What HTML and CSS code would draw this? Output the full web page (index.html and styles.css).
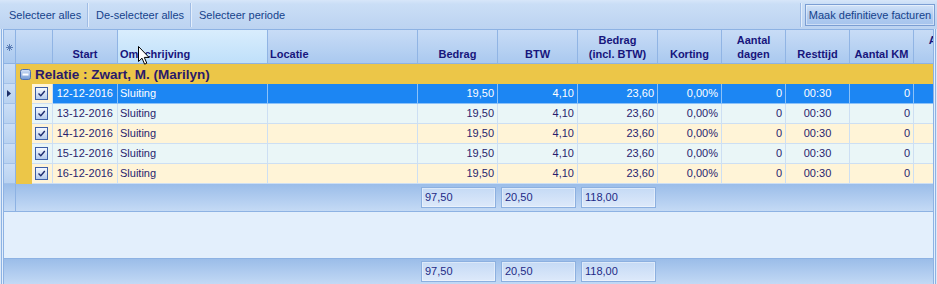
FILE: index.html
```html
<!DOCTYPE html>
<html>
<head>
<meta charset="utf-8">
<title>Facturen</title>
<link rel="stylesheet" href="styles.css">
</head>
<body>
<div class="toolbar">
  <div class="tb-left">
    <button class="tb-btn b1">Selecteer alles</button>
    <button class="tb-btn b2">De-selecteer alles</button>
    <button class="tb-btn b3">Selecteer periode</button>
  </div>
  <div class="tb-right">
    <button class="tb-action">Maak definitieve facturen</button>
  </div>
</div>
<div class="frame">
  <div class="grid">
    <div class="row head">
      <div class="c ind hind"><svg width="7" height="7" viewBox="0 0 7 7"><g stroke="#5a7cb4" stroke-width="1"><path d="M3.5 0V7M0 3.5H7M1 1L6 6M6 1L1 6"/></g></svg></div>
      <div class="c h c-pre"></div>
      <div class="c h c-start">Start</div>
      <div class="c h c-oms hover left">Omschrijving</div>
      <div class="c h c-loc left">Locatie</div>
      <div class="c h c-num">Bedrag</div>
      <div class="c h c-num">BTW</div>
      <div class="c h c-num">Bedrag<br>(incl. BTW)</div>
      <div class="c h c-sm">Korting</div>
      <div class="c h c-sm">Aantal<br>dagen</div>
      <div class="c h c-sm">Resttijd</div>
      <div class="c h c-sm">Aantal KM</div>
      <div class="c h c-sm">Aantal<br>uren</div>
    </div>
    <div class="row grp-row">
      <div class="c ind"></div>
      <div class="grp"><span class="minus"><svg width="11" height="11" viewBox="0 0 11 11"><rect x="0.5" y="0.5" width="10" height="10" rx="2" fill="url(#mg)" stroke="#4d70b2"/><defs><linearGradient id="mg" x1="0" y1="0" x2="0" y2="1"><stop offset="0" stop-color="#d3e2f7"/><stop offset="1" stop-color="#7199d4"/></linearGradient></defs><rect x="2.5" y="4.5" width="6" height="2" fill="#fff"/></svg></span>Relatie : Zwart, M. (Marilyn)</div>
    </div>

    <div class="row drow sel">
      <div class="c ind"><svg width="4" height="7" viewBox="0 0 4 7"><path d="M0 0L4 3.5L0 7Z" fill="#1b2d66"/></svg></div>
      <div class="c indent"></div>
      <div class="c c-chk cream"><span class="cb"><svg width="11" height="11" viewBox="0 0 11 11"><path d="M2.5 5.5L4.8 7.8L8.8 3" fill="none" stroke="#1c2a6e" stroke-width="1.4"/></svg></span></div>
      <div class="c d c-start r">12-12-2016</div>
      <div class="c d c-oms">Sluiting</div>
      <div class="c d c-loc"></div>
      <div class="c d c-num r">19,50</div>
      <div class="c d c-num r">4,10</div>
      <div class="c d c-num r">23,60</div>
      <div class="c d c-sm r">0,00%</div>
      <div class="c d c-sm r">0</div>
      <div class="c d c-sm ctr">00:30</div>
      <div class="c d c-sm r">0</div>
      <div class="c d c-sm"></div>
    </div>
    <div class="row drow cyan">
      <div class="c ind"></div>
      <div class="c indent"></div>
      <div class="c c-chk"><span class="cb"><svg width="11" height="11" viewBox="0 0 11 11"><path d="M2.5 5.5L4.8 7.8L8.8 3" fill="none" stroke="#1c2a6e" stroke-width="1.4"/></svg></span></div>
      <div class="c d c-start r">13-12-2016</div>
      <div class="c d c-oms">Sluiting</div>
      <div class="c d c-loc"></div>
      <div class="c d c-num r">19,50</div>
      <div class="c d c-num r">4,10</div>
      <div class="c d c-num r">23,60</div>
      <div class="c d c-sm r">0,00%</div>
      <div class="c d c-sm r">0</div>
      <div class="c d c-sm ctr">00:30</div>
      <div class="c d c-sm r">0</div>
      <div class="c d c-sm"></div>
    </div>
    <div class="row drow creamrow">
      <div class="c ind"></div>
      <div class="c indent"></div>
      <div class="c c-chk"><span class="cb"><svg width="11" height="11" viewBox="0 0 11 11"><path d="M2.5 5.5L4.8 7.8L8.8 3" fill="none" stroke="#1c2a6e" stroke-width="1.4"/></svg></span></div>
      <div class="c d c-start r">14-12-2016</div>
      <div class="c d c-oms">Sluiting</div>
      <div class="c d c-loc"></div>
      <div class="c d c-num r">19,50</div>
      <div class="c d c-num r">4,10</div>
      <div class="c d c-num r">23,60</div>
      <div class="c d c-sm r">0,00%</div>
      <div class="c d c-sm r">0</div>
      <div class="c d c-sm ctr">00:30</div>
      <div class="c d c-sm r">0</div>
      <div class="c d c-sm"></div>
    </div>
    <div class="row drow cyan">
      <div class="c ind"></div>
      <div class="c indent"></div>
      <div class="c c-chk"><span class="cb"><svg width="11" height="11" viewBox="0 0 11 11"><path d="M2.5 5.5L4.8 7.8L8.8 3" fill="none" stroke="#1c2a6e" stroke-width="1.4"/></svg></span></div>
      <div class="c d c-start r">15-12-2016</div>
      <div class="c d c-oms">Sluiting</div>
      <div class="c d c-loc"></div>
      <div class="c d c-num r">19,50</div>
      <div class="c d c-num r">4,10</div>
      <div class="c d c-num r">23,60</div>
      <div class="c d c-sm r">0,00%</div>
      <div class="c d c-sm r">0</div>
      <div class="c d c-sm ctr">00:30</div>
      <div class="c d c-sm r">0</div>
      <div class="c d c-sm"></div>
    </div>
    <div class="row drow creamrow">
      <div class="c ind"></div>
      <div class="c indent"></div>
      <div class="c c-chk"><span class="cb"><svg width="11" height="11" viewBox="0 0 11 11"><path d="M2.5 5.5L4.8 7.8L8.8 3" fill="none" stroke="#1c2a6e" stroke-width="1.4"/></svg></span></div>
      <div class="c d c-start r">16-12-2016</div>
      <div class="c d c-oms">Sluiting</div>
      <div class="c d c-loc"></div>
      <div class="c d c-num r">19,50</div>
      <div class="c d c-num r">4,10</div>
      <div class="c d c-num r">23,60</div>
      <div class="c d c-sm r">0,00%</div>
      <div class="c d c-sm r">0</div>
      <div class="c d c-sm ctr">00:30</div>
      <div class="c d c-sm r">0</div>
      <div class="c d c-sm"></div>
    </div>

    <div class="row foot">
      <div class="c find"></div>
      <div class="fspace"></div>
      <div class="fcell"><span class="sum">97,50</span></div>
      <div class="fcell"><span class="sum">20,50</span></div>
      <div class="fcell"><span class="sum">118,00</span></div>
    </div>
    <div class="empty"></div>
    <div class="row bfoot">
      <div class="bspace"></div>
      <div class="fcell"><span class="sum">97,50</span></div>
      <div class="fcell"><span class="sum">20,50</span></div>
      <div class="fcell"><span class="sum">118,00</span></div>
    </div>
  </div>
</div>
<svg class="cursor" width="12" height="19" viewBox="0 0 12 19"><path d="M0.5 0.5V15.5L4 12.2L6.6 18.2L8.8 17.2L6.3 11.4H11Z" fill="#fff" stroke="#000" stroke-width="1" stroke-linejoin="miter"/></svg>
</body>
</html>
```
FILE: styles.css
```css
* { box-sizing: border-box; margin: 0; padding: 0; }
html, body { width: 937px; height: 284px; overflow: hidden; }
body {
  position: relative;
  background: #dce9f8;
  font-family: "Liberation Sans", Arial, sans-serif;
  font-size: 11px;
  color: #281e6e;
}

/* toolbar */
.toolbar {
  height: 29px;
  display: flex;
  justify-content: space-between;
  padding: 3px 2px 2px 0;
  background: linear-gradient(#d7e6f9 0, #cadef6 4px, #bcd3f1 100%);
}
.tb-left { display: flex; }
.tb-btn {
  height: 24px;
  background: none;
  border: 0;
  font: 11px "Liberation Sans", Arial, sans-serif;
  color: #15428b;
  text-align: left;
  padding-left: 9px;
}
.b1, .b2 { border-right: 1px solid #9fbce5; box-shadow: 1px 0 0 #e4eefb; }
.b1 { width: 88px; }
.b2 { width: 103px; padding-left: 8px; }
.b3 { padding-left: 8px; }
.tb-right {
  display: flex;
  align-items: center;
  padding-left: 4px;
  border-left: 1px solid #9fbce5;
  box-shadow: inset 1px 0 0 #e4eefb;
}
.tb-action {
  width: 130px;
  height: 22px;
  border: 1px solid #7b9ed3;
  background: linear-gradient(#d2e3f8, #b3cdf0 50%, #a6c4ed);
  box-shadow: inset 0 0 0 1px rgba(255,255,255,0.45);
  font: 11px "Liberation Sans", Arial, sans-serif;
  color: #15428b;
}

/* frame and grid */
.frame {
  width: 935px;
  height: 255px;
  margin-left: 1px;
  padding: 0 1px;
  border-left: 1px solid #8db2e3;
  border-right: 1px solid #8db2e3;
  background: #e3eefb;
}
.grid {
  height: 255px;
  border: 1px solid #8db2e3;
  border-bottom: 0;
  overflow: hidden;
  background: #e3effc;
}
.row { display: flex; width: 974px; }
.c { flex: none; }

.ind {
  width: 12px;
  height: 100%;
  border-right: 1px solid #8db2e3;
  border-bottom: 1px solid #a3c1e8;
  background: linear-gradient(#cbdef6, #b9d2f1);
  display: flex;
  align-items: center;
  justify-content: center;
  padding-right: 1px;
}
.c-pre { width: 37px; }
.indent { width: 16px; background: #ecc648; }
.c-chk { width: 21px; }
.c-start { width: 65px; }
.c-oms { width: 150px; }
.c-loc { width: 150px; }
.c-num { width: 80px; }
.c-sm { width: 64px; }

/* header */
.head {
  height: 34px;
  border-bottom: 1px solid #8db2e3;
  background: linear-gradient(#c8dcf6, #aac9ef);
}
.head .ind { background: transparent; border-bottom: 0; }
.hind svg { margin-top: 1px; }
.h {
  height: 33px;
  display: flex;
  align-items: flex-end;
  justify-content: center;
  text-align: center;
  padding: 0 2px 2px;
  border-right: 1px solid #90b4e4;
  font-weight: bold;
  line-height: 14px;
  color: #17157c;
  white-space: nowrap;
}
.h.left { justify-content: flex-start; text-align: left; }
.hover { background: linear-gradient(#d9edfd, #bfe0fa); }

/* group row */
.grp-row { height: 20px; }
.grp {
  flex: 1;
  background: #ecc648;
  display: flex;
  align-items: center;
  padding-left: 4px;
  font-weight: bold;
  font-size: 13.5px;
  color: #2a1a6a;
  white-space: nowrap;
}
.minus { display: flex; width: 11px; height: 11px; margin-right: 4px; }

/* data rows */
.drow { height: 20px; }
.d {
  height: 20px;
  line-height: 19px;
  padding: 0 3px;
  border-right: 1px solid #cddff3;
  border-bottom: 1px solid #cddff3;
  white-space: nowrap;
  overflow: hidden;
}
.c-chk {
  height: 20px;
  border-right: 1px solid #cddff3;
  border-bottom: 1px solid #cddff3;
  display: flex;
  align-items: center;
  justify-content: center;
  padding-right: 1px;
}
.d.c-oms { padding-left: 2px; }
.d.c-start { padding-right: 4px; }
.r { text-align: right; }
.ctr { text-align: center; }
.cyan .d, .cyan .c-chk { background: #eaf6f7; }
.creamrow .d, .creamrow .c-chk, .cream { background: #fff4d7; }
.sel .d { background: #1c86f3; color: #fff; border-color: #8cc2f8; }
.cb {
  width: 13px;
  height: 13px;
  border: 1px solid #3c5ea7;
  background: linear-gradient(#f6f9fe, #b3caec);
  display: flex;
}

/* footers */
.foot {
  height: 28px;
  border-bottom: 1px solid #8db2e3;
  background: linear-gradient(#9bbde9, #c4daf5);
}
.find { width: 12px; height: 100%; border-right: 1px solid #8db2e3; }
.fspace { width: 402px; flex: none; }
.bspace { width: 414px; flex: none; }
.fcell { width: 80px; flex: none; padding: 3px 2px 0 3px; }
.sum {
  display: block;
  height: 21px;
  border: 1px solid #8cb0e0;
  background: linear-gradient(#c5daf5, #dde9fa);
  box-shadow: inset 0 0 0 1px rgba(255,255,255,0.4);
  padding-left: 3px;
  line-height: 19px;
  color: #1d2a86;
}
.empty {
  height: 47px;
  background: #e3effc;
  border-bottom: 1px solid #8db2e3;
}
.bfoot {
  height: 26px;
  background: linear-gradient(#9bbde9, #c4daf5);
}
.bfoot .fcell { padding-top: 2px; }

.cursor { position: absolute; left: 138px; top: 46px; }
```
